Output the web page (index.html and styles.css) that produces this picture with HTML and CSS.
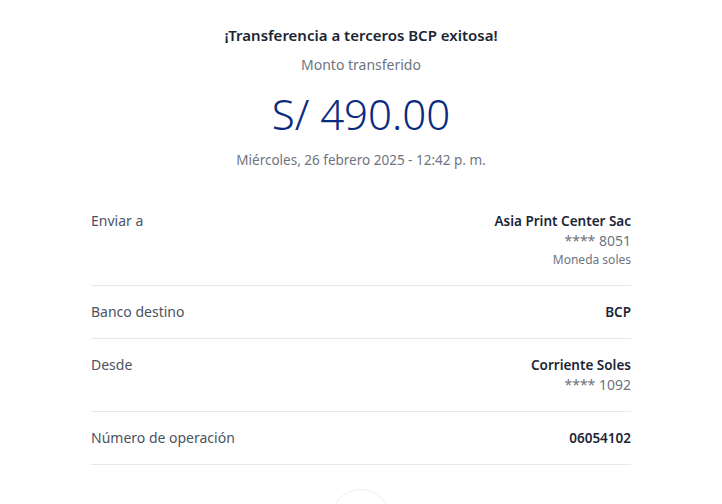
FILE: index.html
```html
<!DOCTYPE html>
<html lang="es">
<head>
<meta charset="utf-8">
<link rel="stylesheet" href="styles.css">
</head>
<body>
<main class="receipt">
  <header class="head">
    <h1 class="title">¡Transferencia a terceros BCP exitosa!</h1>
    <p class="subtitle">Monto transferido</p>
    <p class="amount">S/ 490.00</p>
    <p class="date">Miércoles, 26 febrero 2025 - 12:42 p. m.</p>
  </header>
  <section class="details">
    <div class="row">
      <span class="label">Enviar a</span>
      <div class="value">
        <span class="strong">Asia Print Center Sac</span>
        <span class="muted">**** 8051</span>
        <span class="small">Moneda soles</span>
      </div>
    </div>
    <div class="row">
      <span class="label">Banco destino</span>
      <div class="value"><span class="strong">BCP</span></div>
    </div>
    <div class="row">
      <span class="label">Desde</span>
      <div class="value">
        <span class="strong">Corriente Soles</span>
        <span class="muted">**** 1092</span>
      </div>
    </div>
    <div class="row">
      <span class="label">Número de operación</span>
      <div class="value"><span class="strong">06054102</span></div>
    </div>
  </section>
  <div class="circle-wrap"><div class="circle"></div></div>
</main>
</body>
</html>
```

FILE: styles.css
```css
* { box-sizing: border-box; }
html, body { margin: 0; padding: 0; background: #ffffff; }
body {
  font-family: "Noto Sans", "Open Sans", sans-serif;
  color: #1f2a37;
  width: 722px;
  height: 504px;
  overflow: hidden;
}
.receipt {
  width: 540px;
  margin: 0 auto;
  padding-top: 24px;
}
.head { text-align: center; }
.title {
  margin: 0;
  font-size: 15px;
  font-weight: 600;
  line-height: 22px;
  color: #1b2635;
}
.subtitle {
  margin: 9px 0 0;
  font-size: 14px;
  line-height: 20px;
  color: #6e7580;
}
.amount {
  margin: 13px 0 0;
  font-size: 42px;
  font-weight: 300;
  line-height: 52px;
  color: #0b2b80;
}
.date {
  margin: 10px 0 0;
  font-size: 13.5px;
  line-height: 20px;
  color: #6e7580;
}
.details { margin-top: 41px; }
.row {
  display: flex;
  justify-content: space-between;
  align-items: flex-start;
  padding: 16px 0 16px;
  border-bottom: 1px solid #e6e8eb;
}
.row:first-child { padding-top: 0; }
.label {
  font-size: 14px;
  line-height: 20px;
  color: #4b5361;
}
.value {
  display: flex;
  flex-direction: column;
  align-items: flex-end;
}
.strong {
  font-size: 13.5px;
  font-weight: 600;
  line-height: 20px;
  color: #1b2635;
}
.muted {
  font-size: 14px;
  line-height: 20px;
  color: #6e7580;
}
.small {
  font-size: 12px;
  line-height: 18px;
  color: #6e7580;
}
.circle-wrap {
  display: flex;
  justify-content: center;
  padding-top: 24px;
}
.circle {
  width: 60px;
  height: 60px;
  border-radius: 50%;
  border: 1.5px solid #eeeff1;
}
```
